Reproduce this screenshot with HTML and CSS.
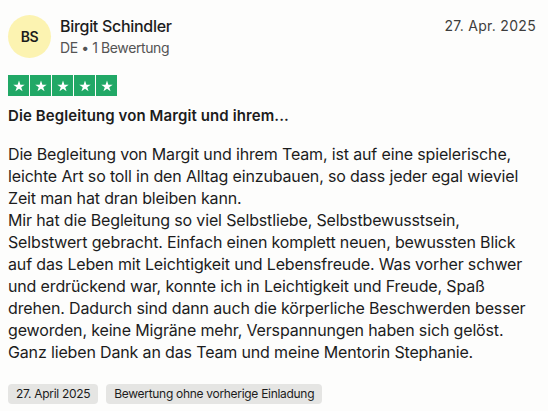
FILE: index.html
```html
<!DOCTYPE html>
<html lang="de">
<head>
  <meta charset="UTF-8" />
  <meta name="viewport" content="width=device-width, initial-scale=1.0" />
  <title>Bewertung – Birgit Schindler</title>
  <link rel="stylesheet" href="styles.css">
</head>
<body>
  <article class="review">
    <header class="kopf">
      <div class="avatar">BS</div>
      <div class="person">
        <div class="name">Birgit Schindler</div>
        <div class="meta">DE • 1 Bewertung</div>
      </div>
      <time class="datum">27. Apr. 2025</time>
    </header>

    <div class="sterne">
      <span class="stern"><svg viewBox="0 0 20 20"><path d="M10 3.2l1.75 5.1h5.4l-4.35 3.15 1.65 5.15L10 13.45 5.55 16.6l1.65-5.15L2.85 8.3h5.4z"/></svg></span>
      <span class="stern"><svg viewBox="0 0 20 20"><path d="M10 3.2l1.75 5.1h5.4l-4.35 3.15 1.65 5.15L10 13.45 5.55 16.6l1.65-5.15L2.85 8.3h5.4z"/></svg></span>
      <span class="stern"><svg viewBox="0 0 20 20"><path d="M10 3.2l1.75 5.1h5.4l-4.35 3.15 1.65 5.15L10 13.45 5.55 16.6l1.65-5.15L2.85 8.3h5.4z"/></svg></span>
      <span class="stern"><svg viewBox="0 0 20 20"><path d="M10 3.2l1.75 5.1h5.4l-4.35 3.15 1.65 5.15L10 13.45 5.55 16.6l1.65-5.15L2.85 8.3h5.4z"/></svg></span>
      <span class="stern"><svg viewBox="0 0 20 20"><path d="M10 3.2l1.75 5.1h5.4l-4.35 3.15 1.65 5.15L10 13.45 5.55 16.6l1.65-5.15L2.85 8.3h5.4z"/></svg></span>
    </div>

    <h2 class="titel">Die Begleitung von Margit und ihrem...</h2>

    <p class="text">Die Begleitung von Margit und ihrem Team, ist auf eine spielerische, leichte Art so toll in den Alltag einzubauen, so dass jeder egal wieviel Zeit man hat dran bleiben kann.<br>Mir hat die Begleitung so viel Selbstliebe, Selbstbewusstsein, Selbstwert gebracht. Einfach einen komplett neuen, bewussten Blick auf das Leben mit Leichtigkeit und Lebensfreude. Was vorher schwer und erdrückend war, konnte ich in Leichtigkeit und Freude, Spaß drehen. Dadurch sind dann auch die körperliche Beschwerden besser geworden, keine Migräne mehr, Verspannungen haben sich gelöst. Ganz lieben Dank an das Team und meine Mentorin Stephanie.</p>

    <div class="tags">
      <span class="tag">27. April 2025</span>
      <span class="tag">Bewertung ohne vorherige Einladung</span>
    </div>
  </article>
</body>
</html>
```

FILE: styles.css
```css
body {
  margin: 0;
  background-color: #fdfdfc;
  color: #1c1c1c;
  font-family: Inter, 'Noto Sans', sans-serif;
}

.review {
  padding: 15px 10px 0 8px;
}

.kopf {
  display: flex;
  align-items: flex-start;
  padding-right: 2px;
}

.avatar {
  width: 43px;
  height: 43px;
  border-radius: 50%;
  background-color: #fcf3b1;
  display: flex;
  align-items: center;
  justify-content: center;
  font-size: 14px;
  font-weight: 600;
  letter-spacing: -0.3px;
}

.person {
  margin-left: 9px;
  flex: 1;
  padding-top: 1px;
}

.name {
  font-size: 16px;
  font-weight: 500;
  letter-spacing: -0.3px;
  line-height: 20px;
}

.meta {
  font-size: 14px;
  color: #545454;
  letter-spacing: -0.4px;
  line-height: 20px;
  margin-top: 2px;
}

.datum {
  font-size: 14px;
  color: #3d3d3d;
  padding-top: 1px;
  line-height: 20px;
  letter-spacing: 0.3px;
}

.sterne {
  display: flex;
  gap: 1px;
  margin-top: 17px;
}

.stern {
  width: 21px;
  height: 21px;
  background-color: #21a866;
  display: flex;
  align-items: center;
  justify-content: center;
}

.stern svg {
  width: 16px;
  height: 16px;
  fill: #fff;
}

.titel {
  font-size: 15px;
  font-weight: 600;
  letter-spacing: 0.1px;
  margin: 10px 0 0;
  line-height: 20px;
}

.text {
  font-size: 16px;
  line-height: 22px;
  letter-spacing: -0.15px;
  margin: 17px 0 0;
}

.tags {
  display: flex;
  gap: 8px;
  margin-top: 21px;
}

.tag {
  background-color: #e5e5e3;
  border-radius: 4px;
  font-size: 12px;
  letter-spacing: -0.3px;
  padding: 3px 8px;
  line-height: 14px;
}
```
